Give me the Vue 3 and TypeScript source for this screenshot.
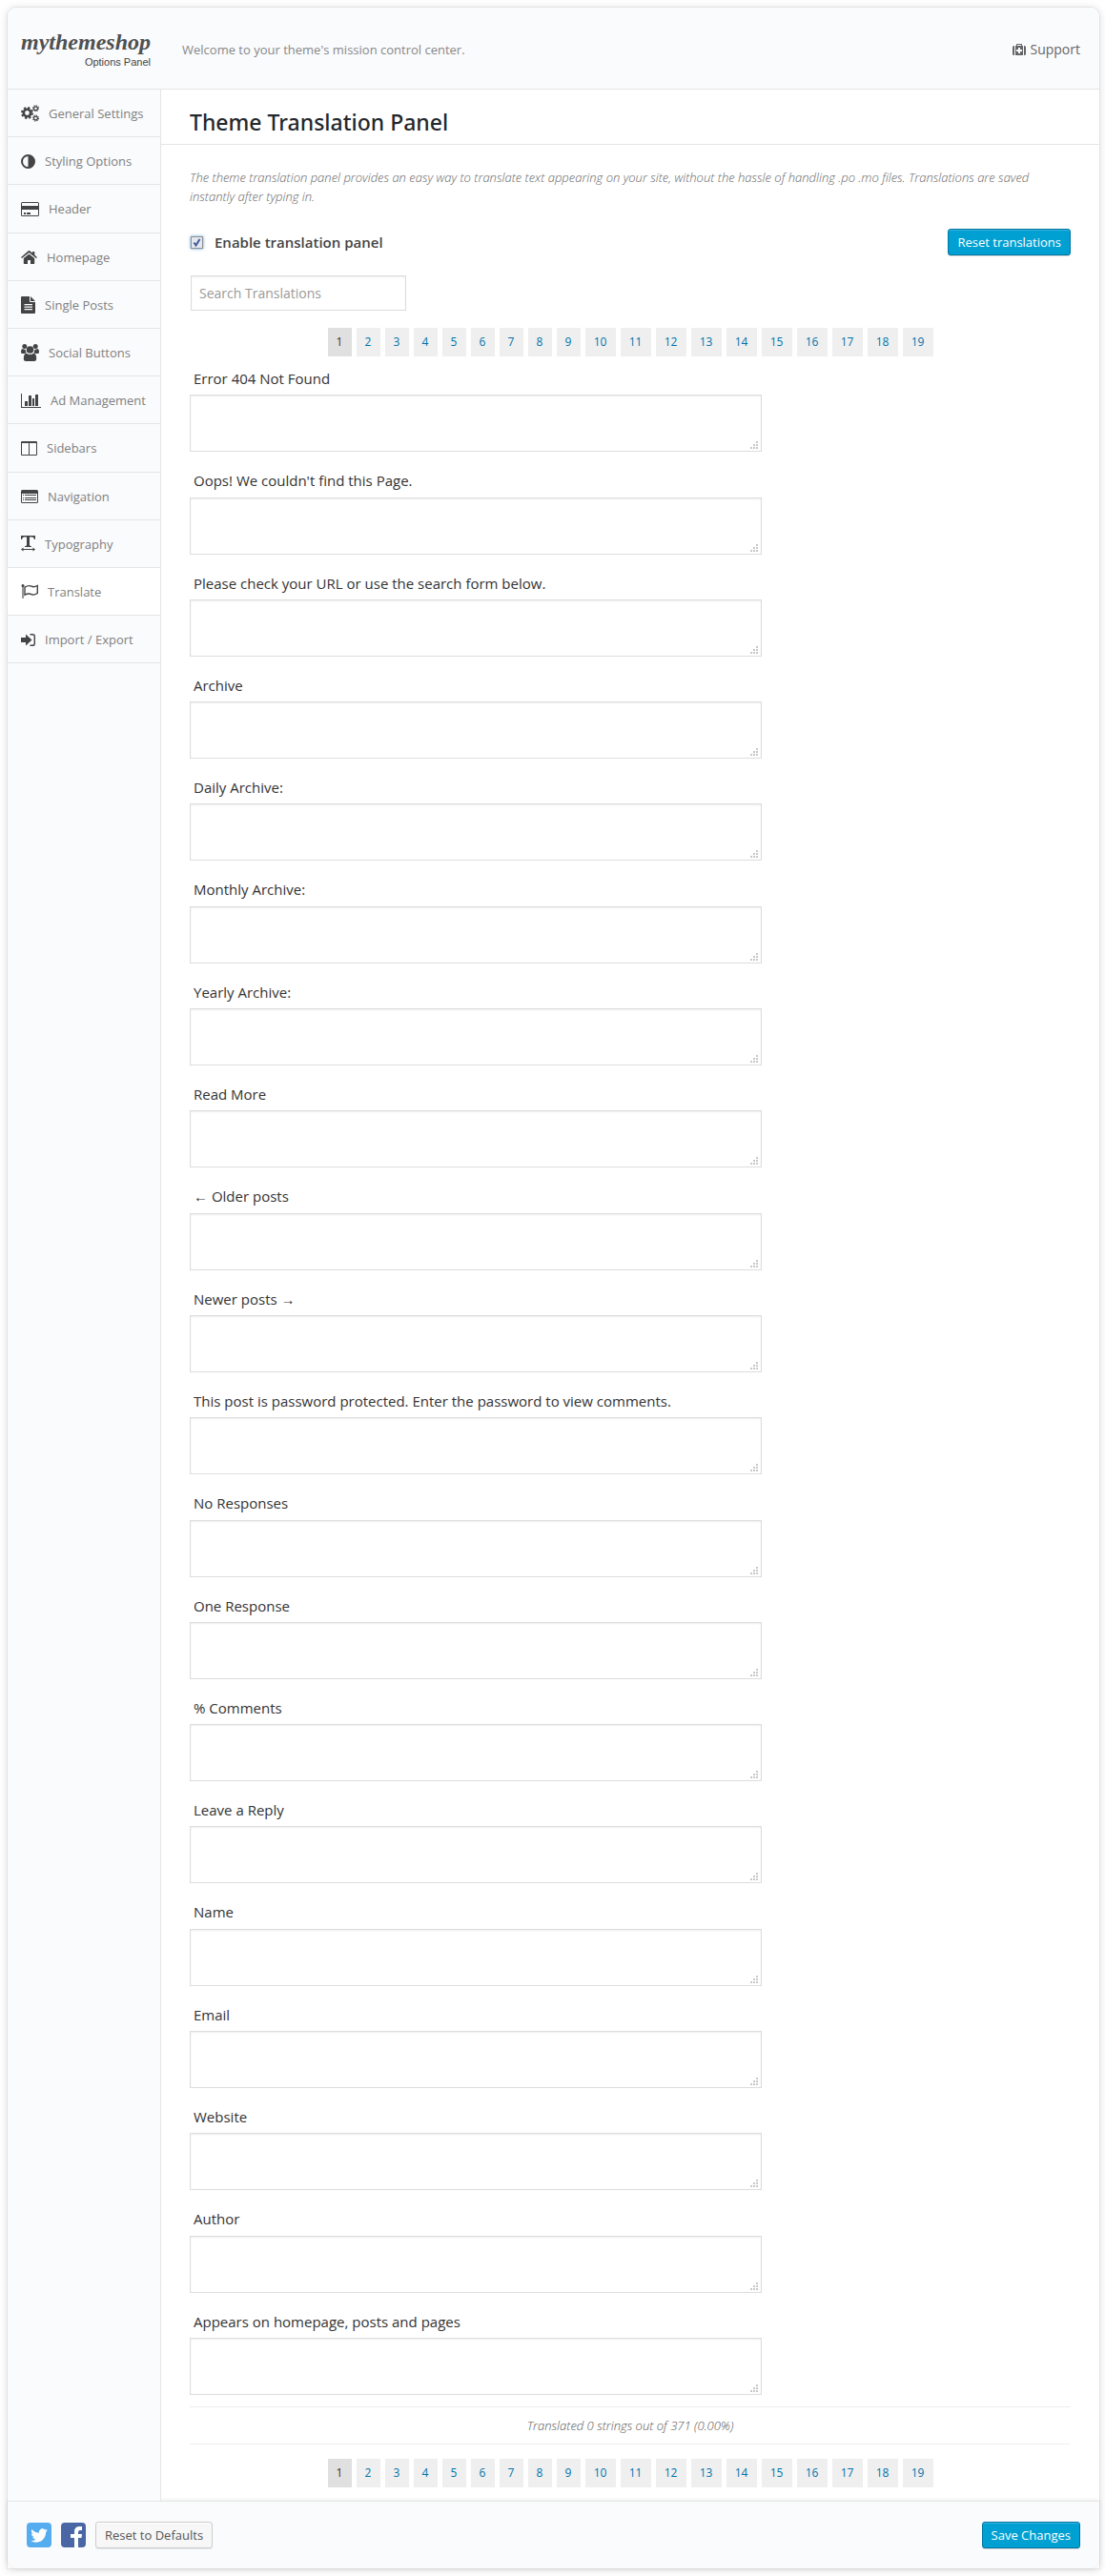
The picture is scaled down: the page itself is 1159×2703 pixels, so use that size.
<script setup lang="ts">
import { ref } from 'vue'

interface MenuItem {
  label: string
  icon: string
  width: number
  height: number
}

const menu: MenuItem[] = [
  { label: 'General Settings', icon: 'cogs', width: 19, height: 18 },
  { label: 'Styling Options', icon: 'adjust', width: 15, height: 15 },
  { label: 'Header', icon: 'card', width: 19, height: 15 },
  { label: 'Homepage', icon: 'home', width: 17, height: 14 },
  { label: 'Single Posts', icon: 'file', width: 15, height: 18 },
  { label: 'Social Buttons', icon: 'group', width: 19, height: 18 },
  { label: 'Ad Management', icon: 'chart', width: 21, height: 15 },
  { label: 'Sidebars', icon: 'columns', width: 17, height: 15 },
  { label: 'Navigation', icon: 'list', width: 18, height: 14 },
  { label: 'Typography', icon: 'type', width: 15, height: 17 },
  { label: 'Translate', icon: 'flag', width: 18, height: 15 },
  { label: 'Import / Export', icon: 'signin', width: 15, height: 13 },
]
const activeItem = ref('Translate')

const strings: string[] = [
  'Error 404 Not Found',
  "Oops! We couldn't find this Page.",
  'Please check your URL or use the search form below.',
  'Archive',
  'Daily Archive:',
  'Monthly Archive:',
  'Yearly Archive:',
  'Read More',
  '← Older posts',
  'Newer posts →',
  'This post is password protected. Enter the password to view comments.',
  'No Responses',
  'One Response',
  '% Comments',
  'Leave a Reply',
  'Name',
  'Email',
  'Website',
  'Author',
  'Appears on homepage, posts and pages',
]
const translations = ref<string[]>(strings.map(() => ''))

const pageCount = 19
const currentPage = ref(1)
const enabled = ref(true)
const search = ref('')
</script>

<template>
  <div class="panel">
    <header class="top">
      <div class="logo">
        <span class="logo-name">mythemeshop</span>
        <span class="logo-sub">Options Panel</span>
      </div>
      <p class="welcome">Welcome to your theme's mission control center.</p>
      <a class="support" href="#">
        <svg width="14" height="12" viewBox="0 0 14 12" fill="#666" aria-hidden="true">
          <path d="M1.6 2H2v10h-.4Q0 12 0 10.500V3.500Q0 2 1.600 2zM12 2h.4Q14 2 14 3.500v7q0 1.500-1.600 1.500H12z" />
          <path fill-rule="evenodd" d="M3 2h1V.8Q4 0 4.800 0h4.400Q10 0 10 .8V2h1v10H3zM5 1v1h4V1zM6 4v2H4v2h2v2h2V8h2V6H8V4z" />
        </svg>
        <span>Support</span>
      </a>
    </header>

    <div class="body">
      <nav class="side">
        <a
          v-for="item in menu"
          :key="item.label"
          href="#"
          class="side-item"
          :class="{ active: item.label === activeItem }"
          @click.prevent="activeItem = item.label"
        >
          <svg
            class="side-icon"
            :width="item.width"
            :height="item.height"
            :viewBox="`0 0 ${item.width} ${item.height}`"
            aria-hidden="true"
          >
            <g v-if="item.icon === 'cogs'" fill="none" stroke="#444">
              <circle cx="6.500" cy="8.500" r="3.700" stroke-width="2.600" />
              <circle cx="6.500" cy="8.500" r="5.500" stroke-width="2" stroke-dasharray="2.300 2.020" />
              <circle cx="15.500" cy="3.700" r="1.900" stroke-width="1.200" />
              <circle cx="15.500" cy="3.700" r="2.900" stroke-width="1.200" stroke-dasharray="1.200 1.077" />
              <circle cx="15.500" cy="14" r="1.900" stroke-width="1.200" />
              <circle cx="15.500" cy="14" r="2.900" stroke-width="1.200" stroke-dasharray="1.200 1.077" />
            </g>
            <g v-else-if="item.icon === 'adjust'">
              <circle cx="7.500" cy="7.500" r="6.500" fill="none" stroke="#444" stroke-width="2" />
              <path d="M7.500 1a6.500 6.500 0 0 1 0 13z" />
            </g>
            <path
              v-else-if="item.icon === 'card'"
              fill-rule="evenodd"
              d="M1.500 0h16Q19 0 19 1.500v12q0 1.500-1.500 1.500h-16Q0 15 0 13.500v-12Q0 0 1.500 0zM1 1.300V4h17V1.300Q18 1 17.700 1H1.300Q1 1 1 1.300zM1 8v5.700q0 .3.300.3h16.400q.3 0 .3-.3V8zM3 11h2v2H3zM6 11h4v2H6z"
            />
            <g v-else-if="item.icon === 'home'">
              <path d="M8.500 3.400 14.200 8v5.300q0 .7-.7.7H10v-4H7v4H3.500q-.7 0-.7-.7V8z" />
              <path d="M8.500 0q.4 0 .8.300L12 2.500V1h2.300v3.500L17 6.900l-1 1.200-7.500-6.200L1 8.100 0 6.900 7.700.3q.4-.3.800-.3z" />
            </g>
            <path
              v-else-if="item.icon === 'file'"
              fill-rule="evenodd"
              d="M0 1q0-1 1-1h8v5q0 1 1 1h5v11q0 1-1 1H1q-1 0-1-1zM10 0l5 5h-5zM3.500 8v1.200h8.500V8zM3.500 10.500v1.200h8.500v-1.200zM3.500 13v1.200h8.500V13z"
            />
            <g v-else-if="item.icon === 'group'">
              <circle cx="3.800" cy="2.500" r="2.500" />
              <circle cx="15.200" cy="2.500" r="2.500" />
              <path d="M0 8.500Q0 5 1.800 5q1 .8 2.200.8L4.800 6Q4.600 8 5.800 9.200 4.500 9.400 3.800 10H1.500Q0 10 0 8.500zM19 8.500Q19 5 17.200 5q-1 .8-2.200.8l-.8.200q.2 2-1 3.200 1.300.2 2 .8h2.300Q19 10 19 8.500z" />
              <circle cx="9.500" cy="6" r="3.800" />
              <path d="M2.800 15.500Q2.800 9.700 5.800 9.700q1.800 1.400 3.700 1.400t3.700-1.400q3 0 3 5.800 0 2.500-2.500 2.500H5.300q-2.500 0-2.500-2.500z" />
            </g>
            <path
              v-else-if="item.icon === 'chart'"
              d="M0 0h1v14h20v1H0zM4 8h3v5H4zM8 2h3v11H8zM12 5h2v8h-2zM15 1h3v12h-3z"
            />
            <path
              v-else-if="item.icon === 'columns'"
              fill-rule="evenodd"
              d="M1 0h15q1 0 1 1v13q0 1-1 1H1q-1 0-1-1V1q0-1 1-1zM1 2v12h7V2zM9 2v12h7V2z"
            />
            <path
              v-else-if="item.icon === 'list'"
              fill-rule="evenodd"
              d="M1.500 0h15Q18 0 18 1.500v11q0 1.500-1.500 1.500h-15Q0 14 0 12.500v-11Q0 0 1.500 0zM1 4v8.500q0 .5.500.5h15q.5 0 .5-.5V4zM2 5h1v1H2zM4 5h12v1H4zM2 8h1v1H2zM4 8h12v1H4zM2 10h1v1H2zM4 10h12v1H4z"
            />
            <g v-else-if="item.icon === 'type'">
              <path d="M0 0h15v4h-1Q13.500 1.500 12 1.500H9V10q0 1 2 1.200V12H4v-.8Q6 11 6 10V1.500H3Q1.500 1.500 1 4H0z" />
              <path d="M0 14.500 2.500 12.500V14h10v-1.500l2.500 2-2.500 2V15h-10v1.500z" />
            </g>
            <g v-else-if="item.icon === 'flag'">
              <path d="M1 2h2v13H1z" opacity=".55" />
              <circle cx="2" cy="1.500" r="1.500" />
              <path d="M4 3.200Q8 .6 11 2.200 13.500 3.500 17.300 1.500V9.500Q13.500 12 11 10.600 8 9 4 11.200z" fill="none" stroke="#444" stroke-width="1.400" />
            </g>
            <g v-else>
              <path d="M0 4h5V.500L11.500 6.500 5 12.500V9H0z" />
              <path d="M9.500.7h2.700q2.100 0 2.100 2.100v7.400q0 2.100-2.100 2.100H9.500" fill="none" stroke="#444" stroke-width="1.400" />
            </g>
          </svg>
          <span>{{ item.label }}</span>
        </a>
      </nav>

      <main class="main">
        <h1 class="title">Theme Translation Panel</h1>
        <div class="content">
          <p class="description">
            The theme translation panel provides an easy way to translate text appearing on your site, without the
            hassle of handling .po .mo files. Translations are saved instantly after typing in.
          </p>

          <div class="toggle-row">
            <label class="toggle">
              <input v-model="enabled" type="checkbox" class="check" />
              <span>Enable translation panel</span>
            </label>
            <button type="button" class="btn primary">Reset translations</button>
          </div>

          <input
            v-model="search"
            type="text"
            class="search"
            placeholder="Search Translations"
            aria-label="Search Translations"
          />

          <nav class="pager" aria-label="Translation pages">
            <a
              v-for="n in pageCount"
              :key="n"
              href="#"
              class="page"
              :class="{ current: n === currentPage, wide: n > 9 }"
              @click.prevent="currentPage = n"
            >{{ n }}</a>
          </nav>

          <div class="fields">
            <div v-for="(text, i) in strings" :key="text" class="field">
              <label :for="`string-${i}`">{{ text }}</label>
              <textarea :id="`string-${i}`" v-model="translations[i]"></textarea>
            </div>
          </div>

          <p class="stats">Translated 0 strings out of 371 (0.00%)</p>

          <nav class="pager" aria-label="Translation pages, bottom">
            <a
              v-for="n in pageCount"
              :key="n"
              href="#"
              class="page"
              :class="{ current: n === currentPage, wide: n > 9 }"
              @click.prevent="currentPage = n"
            >{{ n }}</a>
          </nav>
        </div>
      </main>
    </div>

    <footer class="bottom">
      <a class="social" href="#" aria-label="Twitter">
        <svg width="26" height="26" viewBox="0 0 26 26" aria-hidden="true">
          <rect width="26" height="26" rx="4" fill="#55acee" />
          <path
            transform="translate(3 3.500) scale(.0112)"
            fill="#fff"
            d="M1684 408q-67 98-162 167 1 14 1 42 0 130-38 259.500t-115.500 248.500-184.500 210.500-258 146-323 54.500q-271 0-496-145 35 4 78 4 225 0 401-138-105-2-188-64.500t-114-159.500q33 5 61 5 43 0 85-11-112-23-185.500-111.500t-73.500-205.500v-4q68 38 146 41-66-44-105-115t-39-154q0-88 44-163 121 149 294.500 238.500t371.500 99.500q-8-38-8-74 0-134 94.500-228.500t228.500-94.500q140 0 236 102 109-21 205-78-37 115-142 178 93-10 186-50z"
          />
        </svg>
      </a>
      <a class="social" href="#" aria-label="Facebook">
        <svg width="26" height="26" viewBox="0 0 26 26" aria-hidden="true">
          <rect width="26" height="26" rx="4" fill="#4a66a4" />
          <path fill="#fff" d="M14 26V16h-4v-4h4V9.500Q14 4 19.500 4H22v4h-2q-2 0-2 2v2h4l-.5 4H18v10z" />
        </svg>
      </a>
      <button type="button" class="btn">Reset to Defaults</button>
      <button type="button" class="btn primary save">Save Changes</button>
    </footer>
  </div>
</template>

<style>
body {
  background: #fff;
}
</style>

<style scoped>
.panel {
  margin: 7px 5px 7px 7px;
  border: 1px solid #e3e3e4;
  border-radius: 10px 10px 0 0;
  box-shadow: 0 1px 8px rgba(0, 0, 0, 0.12);
  background: #fff;
  color: #444;
  font-family: 'Open Sans', 'Noto Sans', sans-serif;
  font-size: 13px;
  line-height: 1.4;
}

p,
h1 {
  margin: 0;
}

a {
  color: inherit;
  text-decoration: none;
}

.top {
  display: flex;
  align-items: center;
  height: 85px;
  padding-right: 20px;
  border-bottom: 1px solid #e5e5e5;
  border-radius: 9px 9px 0 0;
  background: #fafbfd;
}

.logo {
  display: flex;
  flex-direction: column;
  align-items: flex-end;
  box-sizing: border-box;
  width: 161px;
  padding-right: 11px;
}

.logo-name {
  color: #505050;
  font: italic bold 24px/28px 'Liberation Serif', serif;
}

.logo-sub {
  color: #444;
  font: 11px/14px 'Liberation Sans', sans-serif;
}

.welcome {
  flex: 1;
  padding: 3px 0 0 22px;
  color: #888;
}

.support {
  display: flex;
  align-items: center;
  gap: 4px;
  padding-top: 3px;
  color: #666;
  font-size: 14px;
}

.body {
  display: flex;
}

.side {
  flex: none;
  width: 160px;
  border-right: 1px solid #e5e5e5;
  background: #fafbfd;
}

.side-item {
  display: flex;
  align-items: center;
  gap: 10px;
  padding: 16px 0 15px 14px;
  border-bottom: 1px solid #e5e5e5;
  color: #808080;
}

.side-item.active {
  background: #fff;
}

.side-item span {
  white-space: nowrap;
}

.side-icon {
  flex: none;
  margin: -4px 0;
  fill: #444;
}

.main {
  flex: 1;
  min-width: 0;
}

.title {
  padding: 23px 30px 11px;
  border-bottom: 1px solid #e5e5e5;
  color: #23282d;
  font-family: 'Noto Sans', sans-serif;
  font-size: 23px;
  font-weight: 500;
  line-height: 23px;
}

.content {
  padding: 24px 30px 14px;
}

.description {
  color: #666;
  font-style: italic;
  font-weight: 300;
  line-height: 20px;
}

.toggle-row {
  display: flex;
  align-items: center;
  justify-content: space-between;
  margin: 24px 0 21px;
}

.toggle {
  display: flex;
  align-items: center;
  gap: 12px;
  padding-left: 1px;
  font-size: 15px;
  font-weight: 600;
  line-height: 20px;
}

.check {
  appearance: none;
  width: 13px;
  height: 13px;
  margin: 0;
  border: 1px solid #8e8f8f;
  box-shadow: 0 0 3px #5b9dd9;
  background: #e9ecef;
}

.check:checked {
  background: #e4e7ee
    url("data:image/svg+xml,%3Csvg xmlns='http://www.w3.org/2000/svg' viewBox='0 0 11 11'%3E%3Cpath d='M2.500 5.500 4.500 8.500 8.500 2' fill='none' stroke='%23405a9b' stroke-width='2'/%3E%3C/svg%3E")
    center / 11px 11px no-repeat;
}

.btn {
  height: 28px;
  padding: 0 9px;
  border: 1px solid #ccc;
  border-radius: 3px;
  box-shadow: inset 0 1px 0 #fff, 0 1px 0 rgba(0, 0, 0, 0.08);
  background: #f7f7f7;
  color: #555;
  font-family: inherit;
  font-size: 13px;
  line-height: 26px;
  cursor: pointer;
}

.btn.primary {
  border-color: #0074a2;
  box-shadow: inset 0 1px 0 rgba(120, 200, 230, 0.5), 0 1px 0 rgba(0, 0, 0, 0.15);
  background: #00a0d2;
  color: #fff;
}

.search {
  display: block;
  box-sizing: border-box;
  width: 226px;
  height: 37px;
  margin-left: 1px;
  padding: 0 8px;
  border: 1px solid #ddd;
  box-shadow: inset 0 1px 2px rgba(0, 0, 0, 0.07);
  background: #fff;
  color: #444;
  font-family: inherit;
  font-size: 14px;
}

.search::placeholder {
  color: #999;
}

.pager {
  display: flex;
  flex-wrap: wrap;
  justify-content: center;
  gap: 5px;
}

.search + .pager {
  margin: 18px 0 10px;
}

.page {
  width: 25px;
  background: #efefef;
  color: #0073aa;
  font-size: 12px;
  line-height: 30px;
  text-align: center;
}

.page.wide {
  width: 32px;
}

.page.current {
  background: #e0e0e0;
  color: #333;
}

.field {
  margin-bottom: 17px;
}

.field label {
  display: block;
  padding-left: 4px;
  color: #333;
  font-size: 15px;
  line-height: 1.82;
}

.field textarea {
  display: block;
  box-sizing: border-box;
  width: 100%;
  max-width: 600px;
  height: 60px;
  margin: 3px 0 0;
  padding: 8px;
  border: 1px solid #ddd;
  box-shadow: inset 0 1px 2px rgba(0, 0, 0, 0.07);
  background: #fff
    url("data:image/svg+xml,%3Csvg xmlns='http://www.w3.org/2000/svg' width='8' height='8' fill='%23c8c8c8'%3E%3Cpath d='M6 0h2v2H6zM3 3h2v2H3zM6 3h2v2H6zM0 6h2v2H0zM3 6h2v2H3zM6 6h2v2H6z'/%3E%3C/svg%3E")
    right 3px bottom 2px no-repeat;
  font: 14px/20px 'Open Sans', sans-serif;
  resize: none;
}

.field:last-child {
  margin-bottom: 12px;
}

.stats {
  margin-bottom: 15px;
  border: solid #eee;
  border-width: 1px 0;
  color: #555;
  font-style: italic;
  font-weight: 300;
  line-height: 38px;
  text-align: center;
}

.bottom {
  display: flex;
  align-items: center;
  gap: 10px;
  height: 70px;
  padding: 0 20px;
  border-top: 1px solid #e5e5e5;
  border-radius: 0 0 10px 10px;
  box-shadow: 0 0 5px rgba(0, 0, 0, 0.1);
  background: #fafbfd;
}

.social {
  display: block;
  height: 26px;
}

.save {
  margin-left: auto;
}
</style>
